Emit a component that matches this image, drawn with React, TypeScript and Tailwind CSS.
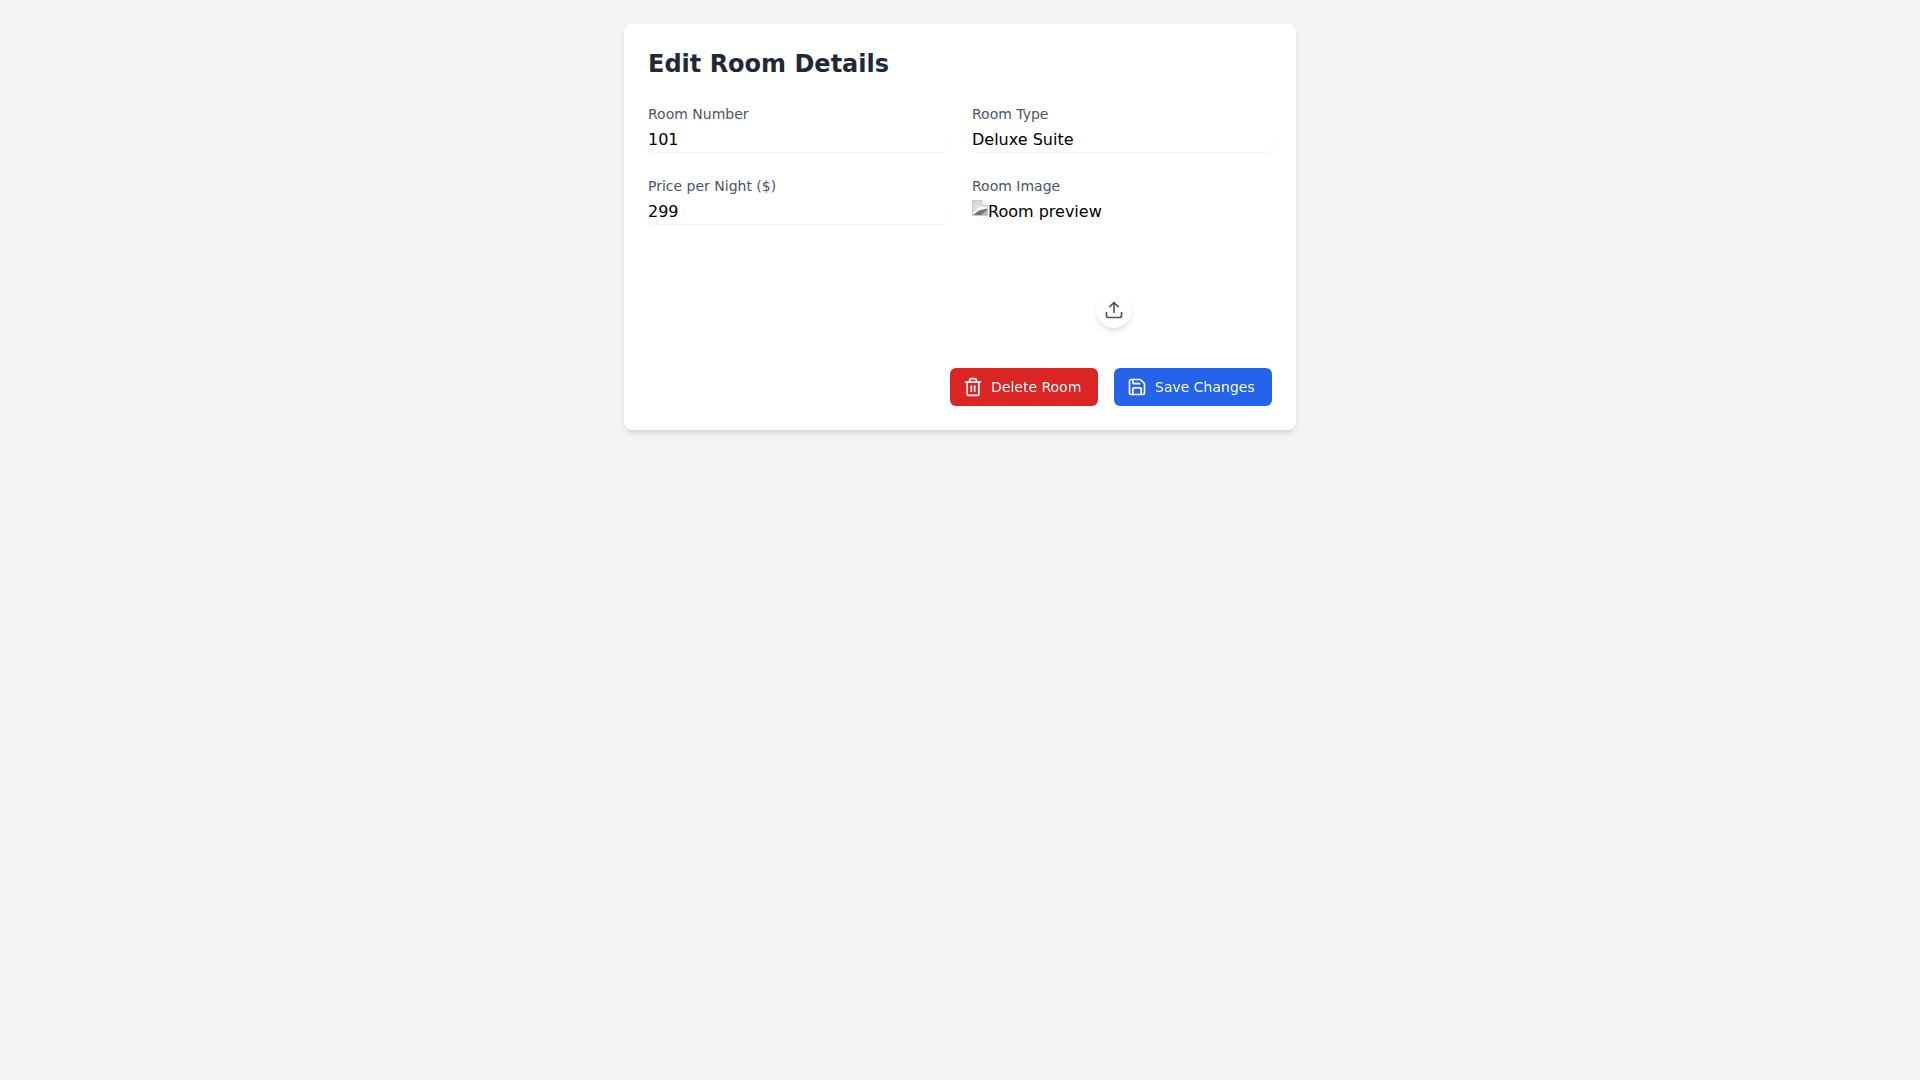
import React from 'react';
import { Save, Trash2, Upload } from 'lucide-react';

const font = 'font-["DejaVu_Sans",sans-serif]';

function Field({ label, value }: { label: string; value: string }) {
  return (
    <div>
      <label className="block text-sm text-[#4b5563]">{label}</label>
      <div className="mt-1 h-6 w-full rounded-md bg-white text-base leading-6 text-black shadow-[0_1px_2px_0_rgba(0,0,0,0.05)]">{value}</div>
    </div>
  );
}

// Chrome's broken image placeholder
function BrokenImage() {
  return (
    <svg width="16" height="16" viewBox="0 0 16 16" className="inline-block shrink-0">
      <path d="M0 0H10L16 5V16H0Z" fill="#c9c9c9" />
      <path d="M10 0V5H16Z" fill="#f2f2f2" />
      <path d="M1 1H9V6H15V7L7 9L1 13Z" fill="#dcdcdc" />
      <path d="M1 13L8 6L15 7V9L7 11L1 15Z" fill="#f7f7f7" />
      <path d="M1 15L7 10.5L15 8.5V15Z" fill="#767676" />
      <path d="M9 15L15 10V15Z" fill="#b5b5b5" />
    </svg>
  );
}

export default function App() {
  return (
    <div className={`min-h-screen bg-[#f3f4f6] pt-6 ${font}`}>
      <div className="mx-auto max-w-2xl rounded-lg bg-white p-6 shadow-md">
        <h2 className="mb-6 text-2xl font-bold text-[#1f2937]">Edit Room Details</h2>
        <div className="grid grid-cols-2 gap-6">
          <Field label="Room Number" value="101" />
          <Field label="Room Type" value="Deluxe Suite" />
          <Field label="Price per Night ($)" value="299" />
          <div>
            <label className="block text-sm text-[#4b5563]">Room Image</label>
            <div className="relative mt-1 h-36">
              <div className="flex h-6 items-start text-base leading-6 text-black">
                <BrokenImage />
                <span>Room preview</span>
              </div>
              <button className="absolute left-[124px] top-[92px] rounded-full bg-white p-2 shadow-md">
                <Upload size={20} className="text-[#4b5563]" />
              </button>
            </div>
          </div>
        </div>
        <div className="mt-6 flex justify-end gap-4">
          <button className="flex items-center gap-2 rounded-md bg-[#dc2626] py-2 pl-[13px] pr-[17px] text-sm leading-[22px] text-white will-change-transform">
            <Trash2 size={20} />
            Delete Room
          </button>
          <button className="flex items-center gap-2 rounded-md bg-[#2563eb] py-2 pl-[13px] pr-[17px] text-sm leading-[22px] text-white will-change-transform">
            <Save size={20} />
            Save Changes
          </button>
        </div>
      </div>
    </div>
  );
}
